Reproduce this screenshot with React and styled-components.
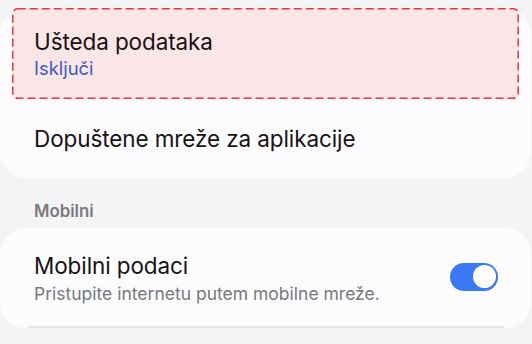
import React from "react";
import styled, { createGlobalStyle } from "styled-components";

const Global = createGlobalStyle`
  html, body {
    margin: 0;
    padding: 0;
    background: #f4f4f6;
  }
  body {
    font-family: Inter, "Noto Sans", sans-serif;
    -webkit-font-smoothing: antialiased;
  }
`;

const Page = styled.div`
  width: 532px;
  height: 344px;
  overflow: hidden;
  background: #f4f4f6;
  padding-top: 3px;
  box-sizing: border-box;
`;

const Card = styled.div`
  width: 531px;
  background: #fcfcfe;
  border-radius: 26px;
  box-sizing: border-box;
`;

const Row = styled.div`
  display: flex;
  align-items: center;
  justify-content: space-between;
  padding: ${({ $pad }) => $pad};
  box-sizing: border-box;
`;

const Highlight = styled(Row)`
  position: relative;
  margin: 5px 12px 0 12px;
  height: 91px;
  padding: 0 0 0 22px;
  background: #fae5e7;
  border-radius: 5px;
`;

const DashFrame = styled.svg`
  position: absolute;
  inset: 0;
  width: 100%;
  height: 100%;
  overflow: visible;
  pointer-events: none;
`;

const Texts = styled.div`
  display: flex;
  flex-direction: column;
`;

const Title = styled.div`
  font-size: 22.5px;
  line-height: 28px;
  color: #171213;
  letter-spacing: -0.1px;
`;

const Sub = styled.div`
  font-size: ${({ $blue }) => ($blue ? "18.4px" : "17.5px")};
  line-height: 22px;
  color: ${({ $blue }) => ($blue ? "#3f5bbd" : "#78787c")};
  margin-top: ${({ $gap }) => $gap || "0"};
`;

const Header = styled.div`
  font-size: 16.8px;
  font-weight: 600;
  color: #7a7a7e;
  padding: 23px 0 7px 34px;
  line-height: 20px;
`;

const Toggle = styled.div`
  width: 48px;
  height: 28px;
  border-radius: 14px;
  background: #3b78f3;
  position: relative;
  margin-right: 33px;
  margin-bottom: 4px;
  flex-shrink: 0;

  &::after {
    content: "";
    position: absolute;
    right: 2.5px;
    top: 2.5px;
    width: 23px;
    height: 23px;
    border-radius: 50%;
    background: #ffffff;
  }
`;

const Divider = styled.div`
  height: 2px;
  background: #e4e4e6;
  margin: 0 27px 0 28px;
`;

export default function App() {
  return (
    <Page>
      <Global />
      <Card>
        <Highlight>
          <DashFrame>
            <rect
              x="0.75"
              y="0.75"
              width="calc(100% - 1.5px)"
              height="calc(100% - 1.5px)"
              rx="5"
              fill="none"
              stroke="#e8373a"
              strokeWidth="1.5"
              strokeDasharray="8 4"
            />
          </DashFrame>
          <Texts>
            <Title>Ušteda podataka</Title>
            <Sub $blue $gap="1px">Isključi</Sub>
          </Texts>
        </Highlight>
        <Row $pad="26px 0 25px 34px">
          <Title>Dopuštene mreže za aplikacije</Title>
        </Row>
      </Card>
      <Header>Mobilni</Header>
      <Card>
        <Row $pad="24px 0 21px 34px">
          <Texts>
            <Title>Mobilni podaci</Title>
            <Sub $gap="3px">Pristupite internetu putem mobilne mreže.</Sub>
          </Texts>
          <Toggle />
        </Row>
        <Divider />
      </Card>
    </Page>
  );
}
